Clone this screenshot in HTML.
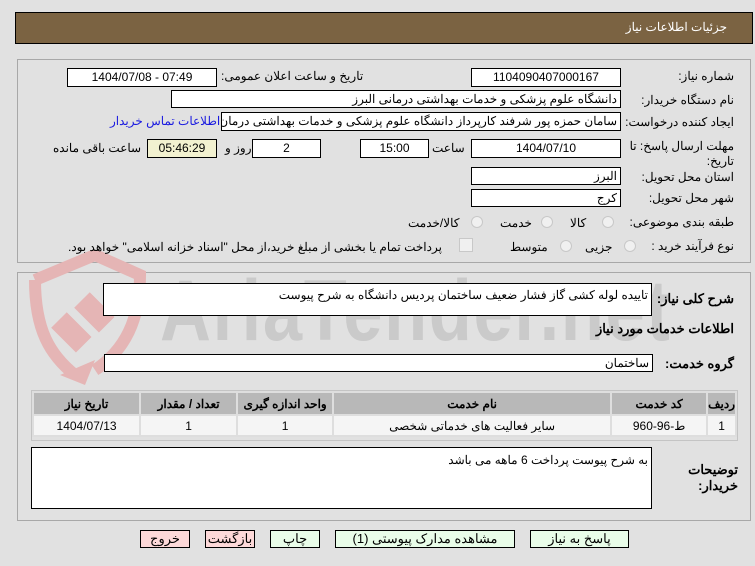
<!DOCTYPE html>
<html><head><meta charset="utf-8"><style>
body{margin:0;width:755px;height:566px;background:#e1e1e1;font-family:Tahoma,"Liberation Sans","Noto Sans CJK SC",sans-serif;font-size:12px;color:#000;position:relative;overflow:hidden}
.a{position:absolute;white-space:nowrap}
.r{direction:rtl}
.in{position:absolute;background:#fff;border:1px solid #000;box-sizing:border-box;direction:rtl;padding:0 3px;line-height:16px;white-space:nowrap;overflow:hidden}
.c{text-align:center}
.panel{position:absolute;border:1px solid #a8a8a8;box-sizing:border-box}
.rad{position:absolute;width:12px;height:12px;border-radius:50%;border:1px solid #c8c8c8;background:#f0f0f0;box-sizing:border-box}
.btn{position:absolute;border:1px solid #000;box-sizing:border-box;text-align:center;line-height:16px;font-size:13px}
td{border:2px solid #dedede;text-align:center;height:19px;padding:0}
th{background:#b8b8b8;border:2px solid #dedede;height:21px;font-weight:bold;padding:0}
</style></head><body>
<div class="a" style="left:15px;top:12px;width:738px;height:32px;background:#7b6342;border:1px solid #000;box-sizing:border-box"></div>
<div class="a r" style="right:28px;top:20px;color:#fff;font-size:12px">جزئیات اطلاعات نیاز</div>

<div class="panel" style="left:17px;top:59px;width:734px;height:204px"></div>
<div class="panel" style="left:17px;top:272px;width:734px;height:249px"></div>

<!-- watermark -->
<svg class="a" style="left:15px;top:250px" width="140" height="140"><g fill="none" stroke="#e5b5b5" stroke-width="12"><path d="M20 30 L80 5 L125 25 C125 70 110 100 80 120"/><path d="M20 30 C20 80 35 105 60 125"/></g><g fill="#e5b5b5"><rect x="45" y="65" width="22" height="35" transform="rotate(-45 56 82)"/><rect x="68" y="45" width="22" height="35" transform="rotate(-45 79 62)"/><path d="M45 125 L80 110 L70 135Z"/></g></svg>
<div class="a" style="left:160px;top:262px;font-size:86px;font-weight:bold;color:#cacaca;font-family:'Liberation Sans Narrow','Liberation Sans',sans-serif;transform:scaleX(0.82);transform-origin:left top;letter-spacing:2px">AriaTender.net</div>

<div class="a r" style="right:21px;top:69px">شماره نیاز:</div>
<div class="in c" style="left:471px;top:68px;width:150px;height:19px;direction:ltr">1104090407000167</div>
<div class="a r" style="left:221px;top:69px">تاریخ و ساعت اعلان عمومی:</div>
<div class="in c" style="left:67px;top:68px;width:150px;height:19px;direction:ltr">1404/07/08 - 07:49</div>

<div class="a r" style="right:21px;top:93px">نام دستگاه خریدار:</div>
<div class="in" style="left:171px;top:90px;width:450px;height:18px">دانشگاه علوم پزشکی و خدمات بهداشتی  درمانی البرز</div>

<div class="a r" style="right:21px;top:115px">ایجاد کننده درخواست:</div>
<div class="in" style="left:221px;top:112px;width:400px;height:19px">سامان حمزه پور شرفند کارپرداز دانشگاه علوم پزشکی و خدمات بهداشتی  درمان</div>
<div class="a r" style="left:110px;top:114px;color:#1a1ae0">اطلاعات تماس خریدار</div>

<div class="a r" style="right:21px;top:139px;line-height:15px;text-align:right">مهلت ارسال پاسخ: تا<br>تاریخ:</div>
<div class="in c" style="left:471px;top:139px;width:150px;height:19px">1404/07/10</div>
<div class="a r" style="left:432px;top:141px">ساعت</div>
<div class="in c" style="left:360px;top:139px;width:69px;height:19px">15:00</div>
<div class="in c" style="left:252px;top:139px;width:69px;height:19px">2</div>
<div class="a r" style="left:225px;top:141px">روز و</div>
<div class="in c" style="left:147px;top:139px;width:70px;height:19px;background:#f2f1d0;direction:ltr">05:46:29</div>
<div class="a r" style="left:53px;top:141px">ساعت باقی مانده</div>

<div class="a r" style="right:21px;top:170px">استان محل تحویل:</div>
<div class="in" style="left:471px;top:167px;width:150px;height:18px">البرز</div>
<div class="a r" style="right:21px;top:191px">شهر محل تحویل:</div>
<div class="in" style="left:471px;top:189px;width:150px;height:18px">کرج</div>

<div class="a r" style="right:21px;top:215px">طبقه بندی موضوعی:</div>
<div class="rad" style="left:602px;top:216px"></div><div class="a r" style="left:570px;top:216px">کالا</div>
<div class="rad" style="left:541px;top:216px"></div><div class="a r" style="left:500px;top:216px">خدمت</div>
<div class="rad" style="left:471px;top:216px"></div><div class="a r" style="left:408px;top:216px">کالا/خدمت</div>

<div class="a r" style="right:21px;top:239px">نوع فرآیند خرید :</div>
<div class="rad" style="left:624px;top:240px"></div><div class="a r" style="left:585px;top:240px">جزیی</div>
<div class="rad" style="left:560px;top:240px"></div><div class="a r" style="left:510px;top:240px">متوسط</div>
<div class="a" style="left:459px;top:238px;width:12px;height:12px;border:1px solid #c8c8c8;background:#f0f0f0"></div>
<div class="a r" style="left:68px;top:240px">پرداخت تمام یا بخشی از مبلغ خرید،از محل "اسناد خزانه اسلامی" خواهد بود.</div>

<div class="a r" style="right:21px;top:291px;font-weight:bold;font-size:13px">شرح کلی نیاز:</div>
<div class="in" style="left:103px;top:283px;width:549px;height:33px;line-height:22px">تاییده لوله کشی گاز فشار ضعیف  ساختمان پردیس دانشگاه به شرح پیوست</div>
<div class="a r" style="right:21px;top:321px;font-weight:bold;font-size:13px">اطلاعات خدمات مورد نیاز</div>
<div class="a r" style="right:21px;top:356px;font-weight:bold;font-size:13px">گروه خدمت:</div>
<div class="in" style="left:104px;top:354px;width:549px;height:18px">ساختمان</div>

<div class="a" style="left:31px;top:390px;width:707px;height:51px;border:1px solid #c4c4c4;box-sizing:border-box"></div>
<table class="a r" style="left:32px;top:391px;width:705px;border-collapse:collapse;direction:rtl">
<tr><th style="width:25px">ردیف</th><th style="width:94px">کد خدمت</th><th style="width:276px">نام خدمت</th><th style="width:94px">واحد اندازه گیری</th><th style="width:95px">تعداد / مقدار</th><th>تاریخ نیاز</th></tr>
<tr style="background:#f5f5f5"><td>1</td><td>ط-96-960</td><td>سایر فعالیت های خدماتی شخصی</td><td>1</td><td>1</td><td>1404/07/13</td></tr>
</table>

<div class="a r" style="right:17px;top:462px;font-weight:bold;font-size:13px;line-height:16px;text-align:right">توضیحات<br>خریدار:</div>
<div class="in" style="left:31px;top:447px;width:621px;height:62px;line-height:24px">به شرح پیوست پرداخت 6 ماهه می باشد</div>

<div class="btn" style="left:530px;top:530px;width:99px;height:18px;background:#e9fde9">پاسخ به نیاز</div>
<div class="btn" style="left:335px;top:530px;width:180px;height:18px;background:#e9fde9">مشاهده مدارک پیوستی (1)</div>
<div class="btn" style="left:270px;top:530px;width:50px;height:18px;background:#e9fde9">چاپ</div>
<div class="btn" style="left:205px;top:530px;width:50px;height:18px;background:#fdd9d9">بازگشت</div>
<div class="btn" style="left:140px;top:530px;width:50px;height:18px;background:#fdd9d9">خروج</div>
</body></html>
